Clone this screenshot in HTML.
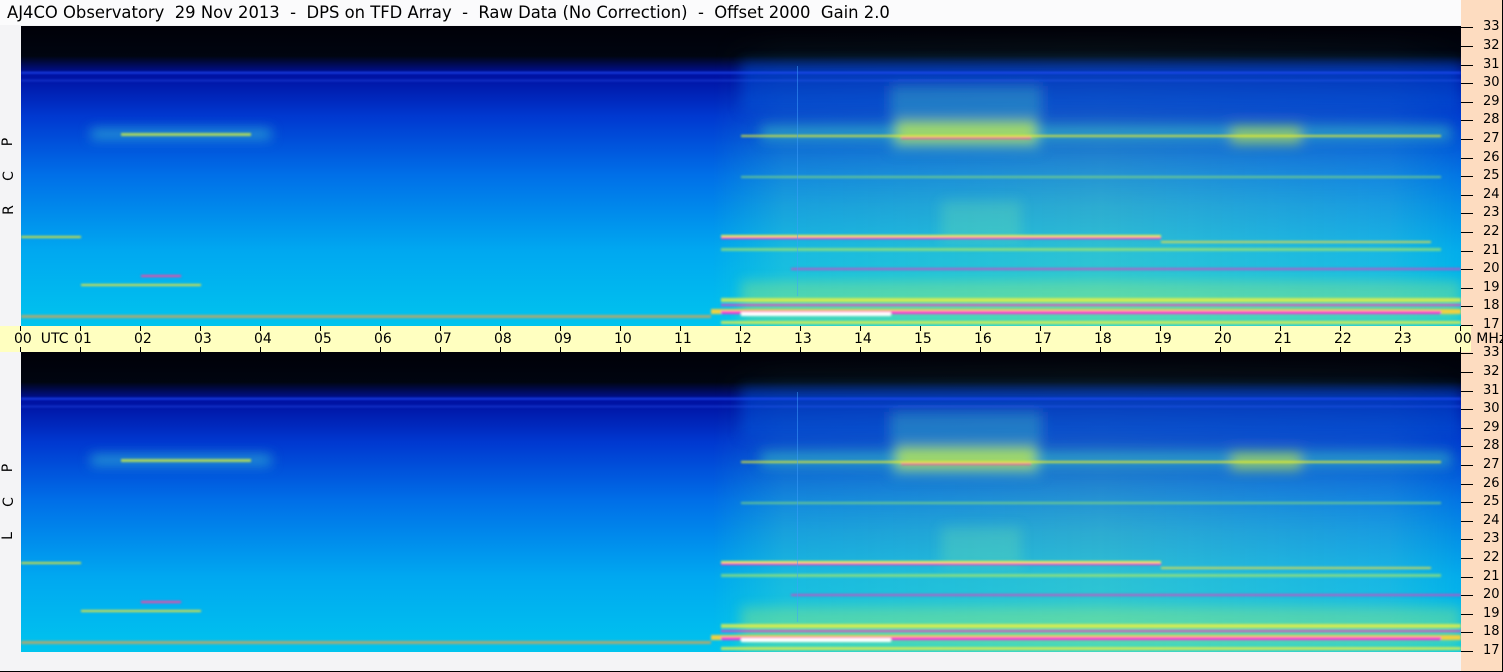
<!DOCTYPE html>
<html><head><meta charset="utf-8"><style>
body{margin:0;width:1503px;height:672px;overflow:hidden;background:#f4f4f6;font-family:"DejaVu Sans","Liberation Sans",sans-serif;position:relative}
#frame{position:absolute;left:0;top:0;width:1502px;height:671px;border-right:1px solid #000;border-bottom:1px solid #000;box-sizing:content-box}
#title{position:absolute;left:0;top:0;width:1461px;height:25px;background:#fbfbfc;font-size:16.4px;line-height:26px;padding-left:7px;color:#000;white-space:pre}
.panel{position:absolute;left:21px;width:1440px;height:300px}
#right{position:absolute;left:1461px;top:0;width:41px;height:671px;background:#fddcc0}
#taxis{position:absolute;left:0;top:326px;width:1471px;height:26px;background:#ffffc0}
.t{position:absolute;top:5px;font-size:14px;line-height:16px;white-space:nowrap}
.tk{position:absolute;width:1px;background:#000}
.f{position:absolute;left:1483px;font-size:13px;line-height:14px}
.fk{position:absolute;left:1461px;width:12px;height:1px;background:#000}
.lab{position:absolute;left:4px;font-size:14px;transform:rotate(-90deg)}
</style></head><body>
<div id="frame"></div>
<div id="title">AJ4CO Observatory  29 Nov 2013  -  DPS on TFD Array  -  Raw Data (No Correction)  -  Offset 2000  Gain 2.0</div>
<div id="right"></div>
<div id="taxis"></div>
<svg width="0" height="0" style="position:absolute">
<defs>
<linearGradient id="v" x1="0" y1="0" x2="0" y2="1">
<stop offset="0" stop-color="#000008"/><stop offset="0.1" stop-color="#000510"/><stop offset="0.16" stop-color="#0010a0"/><stop offset="0.3" stop-color="#0038d0"/><stop offset="0.5" stop-color="#0070e8"/><stop offset="0.75" stop-color="#00a8f0"/><stop offset="1" stop-color="#00c4ee"/></linearGradient>
<linearGradient id="h" x1="0" y1="0" x2="1" y2="0">
<stop offset="0" stop-color="#40ffa0" stop-opacity="0"/><stop offset="0.48" stop-color="#40ffa0" stop-opacity="0"/><stop offset="0.53" stop-color="#60f0b0" stop-opacity="0.25"/><stop offset="0.75" stop-color="#80f0a0" stop-opacity="0.35"/><stop offset="0.95" stop-color="#60e0c0" stop-opacity="0.25"/><stop offset="1" stop-color="#40ffa0" stop-opacity="0.05"/></linearGradient>
<linearGradient id="hv" x1="0" y1="0" x2="0" y2="1">
<stop offset="0" stop-color="#fff" stop-opacity="0"/><stop offset="0.25" stop-color="#fff" stop-opacity="0.4"/><stop offset="0.6" stop-color="#fff" stop-opacity="1"/><stop offset="1" stop-color="#fff" stop-opacity="1"/></linearGradient>
<mask id="m"><rect width="1440" height="300" fill="url(#hv)"/></mask>
<filter id="b"><feGaussianBlur stdDeviation="6"/></filter>
<filter id="b2"><feGaussianBlur stdDeviation="1"/></filter>
<g id="spec">
<rect width="1440" height="300" fill="url(#v)"/>
<rect width="1440" height="300" fill="url(#h)" mask="url(#m)"/>
<g filter="url(#b)">
<rect x="720" y="35" width="720" height="50" fill="#1060e0" opacity="0.4"/>
<rect x="870" y="60" width="150" height="65" fill="#40c0c0" opacity="0.4"/>
<rect x="740" y="100" width="690" height="14" fill="#40d0c0" opacity="0.5"/>
<rect x="875" y="95" width="140" height="22" fill="#d0f040" opacity="0.7"/>
<rect x="1210" y="100" width="70" height="18" fill="#d0f040" opacity="0.6"/>
<rect x="70" y="103" width="180" height="10" fill="#40d0d0" opacity="0.6"/>
<rect x="920" y="175" width="80" height="40" fill="#80f0a0" opacity="0.25"/>
<rect x="720" y="255" width="720" height="40" fill="#b0f060" opacity="0.35"/>
</g>
<g filter="url(#b2)">
<rect x="0" y="46" width="1440" height="1.5" fill="#2050ff"/>
<rect x="0" y="54" width="1440" height="1" fill="#3060ff" opacity="0.7"/>
<rect x="720" y="109" width="700" height="2" fill="#f0f020" opacity="0.8"/>
<rect x="880" y="111" width="130" height="2" fill="#ff40a0" opacity="0.8"/>
<rect x="100" y="107" width="130" height="3" fill="#d0f040" opacity="0.8"/>
<rect x="720" y="150" width="700" height="2" fill="#a0f060" opacity="0.6"/>
<rect x="0" y="210" width="60" height="2" fill="#d0e040"/>
<rect x="700" y="209" width="440" height="4" fill="#f0f040"/>
<rect x="700" y="211" width="440" height="2" fill="#ff30c0"/>
<rect x="700" y="222" width="720" height="3" fill="#c0f050" opacity="0.6"/>
<rect x="1140" y="215" width="270" height="2" fill="#f0e040" opacity="0.8"/>
<rect x="770" y="242" width="670" height="2" fill="#e040c0" opacity="0.8"/>
<rect x="120" y="249" width="40" height="2" fill="#ff40a0"/>
<rect x="60" y="258" width="120" height="2" fill="#e0e040"/>
<rect x="700" y="272" width="740" height="4" fill="#f0f040" opacity="0.8"/>
<rect x="700" y="278" width="740" height="2" fill="#ff30c0" opacity="0.8"/>
<rect x="690" y="283" width="750" height="5" fill="#f0d040"/>
<rect x="700" y="285" width="720" height="3" fill="#ff30d0"/>
<rect x="720" y="286" width="150" height="4" fill="#ffffff"/>
<rect x="0" y="289" width="690" height="3" fill="#f0a040" opacity="0.7"/>
<rect x="700" y="295" width="740" height="3" fill="#f0f040" opacity="0.8"/>
</g>
<rect x="776" y="40" width="1" height="230" fill="#40a0ff" opacity="0.5"/>
</g></defs></svg>
<svg class="panel" style="top:26px" viewBox="0 0 1440 300"><use href="#spec"/></svg>
<svg class="panel" style="top:352px" viewBox="0 0 1440 300"><use href="#spec"/></svg>
<div class="lab" style="top:134px">P</div><div class="lab" style="top:168px">C</div><div class="lab" style="top:202px">R</div>
<div class="lab" style="top:460px">P</div><div class="lab" style="top:494px">C</div><div class="lab" style="top:528px">L</div>
<div id="ticks"></div>
<script>
var h='';
for(var i=0;i<=24;i++){var x=20+i*60;var lab=(i==24?'00':(i<10?'0'+i:''+i));
h+='<div class="tk" style="left:'+x+'px;top:326px;height:5px"></div><div class="tk" style="left:'+x+'px;top:347px;height:5px"></div>';
h+='<div class="t" style="left:'+(x-6)+'px;top:331px">'+lab+(i==0?'&nbsp;&nbsp;UTC':'')+(i==24?' MHz':'')+'</div>';}
for(var p=0;p<2;p++){var base=p?352:26;for(var f=17;f<=33;f++){var y=base+299-(f-17)*18.6;
h+='<div class="fk" style="top:'+Math.round(y)+'px"></div><div class="f" style="top:'+Math.round(y-7)+'px">'+f+'</div>';}}
document.getElementById('ticks').innerHTML=h;
</script>
</body></html>
